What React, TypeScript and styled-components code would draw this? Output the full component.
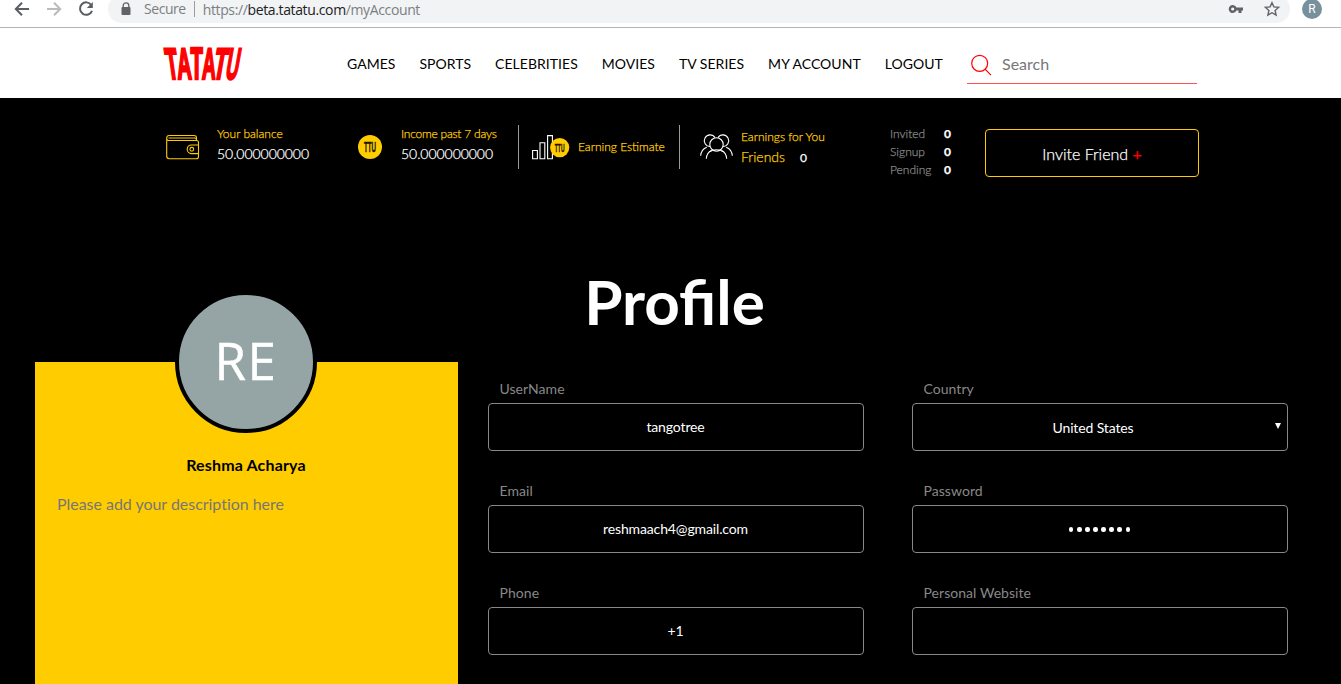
import React from 'react'
import styled, { createGlobalStyle } from 'styled-components'

const GlobalStyle = createGlobalStyle`
  * {
    box-sizing: border-box;
  }
  body {
    margin: 0;
    background-color: #000;
    font-family: Lato, "Liberation Sans", sans-serif;
    overflow: hidden;
  }
  svg {
    display: block;
    flex-shrink: 0;
    overflow: visible;
  }
`

const Page = styled.div`
  height: 684px;
  overflow: hidden;
  background-color: #000;
`

/* browser bar */
const BrowserBar = styled.div`
  display: flex;
  align-items: flex-start;
  height: 28px;
  background-color: #fff;
  border-bottom: 1px solid #b2b4b6;
`
const BrowserButtons = styled.div`
  display: flex;
  width: 108px;
  padding-left: 13px;
  gap: 14px;
`
const AddressBar = styled.div`
  display: flex;
  align-items: center;
  width: 1182px;
  height: 28px;
  margin-top: -5px;
  padding: 0 10px 0 12px;
  border-radius: 14px;
  background-color: #f1f3f4;
  font-family: "Open Sans", "Noto Sans", sans-serif;
  font-size: 14px;
  color: #7b7f83;
`
const Secure = styled.span`
  margin-left: 12px;
  padding-right: 8px;
  border-right: 1px solid #9a9da1;
  line-height: 16px;
  letter-spacing: -0.45px;
`
const Url = styled.span`
  flex: 1;
  margin-left: 8px;
  letter-spacing: -0.37px;
  b {
    font-weight: 400;
    color: #202124;
  }
`
const BarIcons = styled.div`
  display: flex;
  align-items: center;
  gap: 20px;
`
const UserBadge = styled.div`
  width: 20px;
  height: 20px;
  margin: -1px 0 0 12px;
  border-radius: 50%;
  background-color: #78909c;
  color: #fff;
  font-family: Roboto, sans-serif;
  font-size: 12px;
  line-height: 20px;
  text-align: center;
`

/* site header */
const Header = styled.header`
  display: flex;
  height: 70px;
  padding-left: 163px;
  background-color: #fff;
`
const LogoBox = styled.div`
  width: 184px;
  padding-top: 20px;
`
const Nav = styled.nav`
  display: flex;
  gap: 24px;
  width: 620px;
  line-height: 72px;
  font-size: 14px;
  letter-spacing: 0.03px;
  white-space: nowrap;
  color: #000;
`
const SearchBox = styled.div`
  display: flex;
  align-items: center;
  width: 230px;
  height: 38px;
  margin-top: 18px;
  padding: 0 0 2px 4px;
  gap: 10px;
  border-bottom: 1px solid #ff5050;
  font-size: 16px;
  color: #777;
`

/* balance row */
const Stats = styled.section`
  display: flex;
  height: 79px;
  padding: 27px 0 0 166px;
  color: #fff;
  font-weight: 300;
  -webkit-text-stroke: 0.25px;
`
const Stat = styled.div<{ $width: number; $gap: number; $line?: boolean; $left?: number }>`
  display: flex;
  align-items: center;
  width: ${(p) => p.$width}px;
  height: 44px;
  padding-left: ${(p) => p.$left || 0}px;
  gap: ${(p) => p.$gap}px;
  border-left: ${(p) => (p.$line ? '1px solid #999' : 'none')};
  white-space: nowrap;
`
const StatLabel = styled.div<{ $spacing?: number }>`
  font-size: 12px;
  line-height: 20px;
  letter-spacing: ${(p) => p.$spacing || 0}px;
  color: #fc0;
`
const StatValue = styled.div`
  font-size: 14px;
  line-height: 20px;
  letter-spacing: -0.05px;
`
const StatText = styled.div<{ $up?: number }>`
  margin-top: ${(p) => -(p.$up || 0)}px;
`
const Friends = styled.div`
  display: flex;
  gap: 15px;
  font-size: 14px;
  line-height: 20px;
  color: #fc0;
  span {
    padding-top: 1px;
    font-size: 12px;
    color: #fff;
    font-weight: 400;
  }
`
const Invites = styled.dl`
  display: grid;
  grid-template-columns: 54px 41px;
  grid-auto-rows: 18px;
  margin: 0;
  font-size: 12px;
  line-height: 18px;
  color: #888;
  dd {
    margin: 0;
    color: #fff;
    font-weight: 700;
  }
`
const InviteButton = styled.button`
  width: 214px;
  height: 48px;
  margin-top: 4px;
  padding: 0;
  border: 1px solid #fc0;
  border-radius: 4px;
  background: none;
  color: #fff;
  font: 300 16px Lato, sans-serif;
  span {
    color: #f00;
    font-weight: 400;
  }
`

/* profile */
const Title = styled.h1`
  height: 88px;
  margin: 86px 0 0 8px;
  font-size: 62px;
  line-height: 76px;
  text-align: center;
  color: #fff;
`
const Profile = styled.main`
  display: flex;
  align-items: flex-start;
  margin-top: 11px;
  padding-left: 35px;
`
const Card = styled.aside`
  display: flex;
  flex-direction: column;
  align-items: center;
  width: 423px;
  height: 330px;
  padding-right: 1px;
  background-color: #fc0;
`
const Avatar = styled.div`
  width: 142px;
  height: 142px;
  margin-top: -71px;
  border: 4px solid #000;
  border-radius: 50%;
  background-color: #95a5a6;
  color: #fff;
  font-family: "Open Sans", sans-serif;
  font-size: 51px;
  line-height: 130px;
  letter-spacing: 1.5px;
  text-align: center;
  -webkit-text-stroke: 0.5px;
`
const Name = styled.div`
  margin-top: 20px;
  font-size: 16px;
  line-height: 24px;
  letter-spacing: 0.17px;
  font-weight: 700;
  color: #000;
`
const Description = styled.div`
  align-self: stretch;
  margin-top: 15px;
  padding-left: 22px;
  font-size: 16px;
  line-height: 24px;
  letter-spacing: -0.03px;
  font-variant-ligatures: none;
  color: #777;
`
const Form = styled.form`
  display: grid;
  grid-template-columns: 376px 376px;
  grid-auto-rows: 102px;
  column-gap: 48px;
  margin: 16px 0 0 30px;
`
const Label = styled.label`
  display: block;
  padding-left: 11.5px;
  font-size: 14px;
  line-height: 22px;
  letter-spacing: 0.05px;
  color: #888;
`
const Field = styled.div`
  display: flex;
  align-items: center;
  justify-content: center;
  height: 48px;
  margin-top: 3px;
  padding: 0 1px 2px 0;
  border: 1px solid #888;
  border-radius: 4px;
  font-size: 14px;
  letter-spacing: -0.13px;
  color: #fff;
`
const SelectField = styled(Field)`
  padding: 0 5px 0 0;
  span {
    flex: 1;
    margin-left: -1px;
    text-align: center;
  }
`
const Dots = styled.span`
  display: flex;
  gap: 3.6px;
  margin-top: 3px;
  i {
    width: 4.5px;
    height: 4.5px;
    border-radius: 50%;
    background-color: #fff;
  }
`

// each letter is condensed and leans outwards from the middle
const logoLetters = [
  { char: 'T', x: 0.6, skew: 8, sx: 0.98 },
  { char: 'A', x: 13.2, skew: 3, sx: 1 },
  { char: 'T', x: 27.6, skew: 0, sx: 1.01 },
  { char: 'A', x: 39.8, skew: -2, sx: 0.95 },
  { char: 'T', x: 54.3, skew: -10, sx: 1.08 },
  { char: 'U', x: 67, skew: -10, sx: 0.88 },
]

function Logo() {
  return (
    <svg width="82" height="33" viewBox="0 0 82 33">
      {logoLetters.map((l, i) => (
        <text
          key={i}
          transform={`translate(${l.x} 0) skewX(${l.skew}) translate(0 31.2) scale(${l.sx} 2.2)`}
          fontFamily="Liberation Sans, sans-serif"
          fontWeight="700"
          fontSize="20"
          fill="#f00"
          stroke="#f00"
          strokeWidth="2"
          vectorEffect="non-scaling-stroke"
        >
          {l.char}
        </text>
      ))}
    </svg>
  )
}

function Arrow({ color, flip }: { color: string; flip?: boolean }) {
  return (
    <svg width="18" height="18" viewBox="0 0 18 18" fill="none" stroke={color} strokeWidth="2">
      <path d={flip ? 'M2 9h13M9 2.7l6.2 6.3L9 15.3' : 'M16 9H3M9 2.7L2.8 9 9 15.3'} />
    </svg>
  )
}

const CoinText = styled.text`
  font-family: "Liberation Sans", sans-serif;
  font-weight: 700;
  font-size: 10px;
  fill: #1a1400;
  stroke: #1a1400;
  stroke-width: 0.3px;
`

function Coin({ size }: { size: number }) {
  return (
    <svg width={size} height={size} viewBox="0 0 24 24">
      <circle cx="12" cy="12" r="12" fill="#fc0" />
      <CoinText transform="translate(6 17) scale(.62 1.45)">TTU</CoinText>
    </svg>
  )
}

function Wallet() {
  return (
    <svg width="34" height="26" viewBox="0 0 34 26" fill="none" stroke="#fc0" strokeWidth="1.1">
      <path d="M30.5 6.5V4a2.5 2.5 0 0 0-2.5-2.5H3a2.3 2.3 0 0 0-2.3 2.3V22a2.7 2.7 0 0 0 2.7 2.7h26.8a2.3 2.3 0 0 0 2.3-2.3V8.5a2 2 0 0 0-2-2H3A2.3 2.3 0 0 1 .7 4" />
      <path d="M2.5 4h26a2 2 0 0 1 2 2" />
      <path d="M32.5 11h-7a4.3 4.3 0 0 0 0 8.6h7" />
      <circle cx="25.8" cy="15.3" r="1.9" />
    </svg>
  )
}

function EarningIcon() {
  return (
    <svg width="38" height="26" viewBox="0 0 38 26">
      <g fill="none" stroke="#fff" strokeWidth="1.1">
        <path d="M.6 16.5h4.8v8.3H.6zM8 8.8h4.8v16H8zM15.6 1.6h4.8v23.200h-4.800z" />
      </g>
      <circle cx="27.7" cy="13.6" r="9.6" fill="#fc0" />
      <CoinText transform="translate(22.800 17.600) scale(.5 1.15)">TTU</CoinText>
    </svg>
  )
}

function PeopleIcon() {
  return (
    <svg width="34" height="26" viewBox="0 0 34 26" fill="none" stroke="#fff" strokeWidth="1.1">
      <circle cx="16.5" cy="10.5" r="6.7" />
      <path d="M10.2 12.5A5.8 5.8 0 1 1 15 3.6M18 3.6a5.8 5.8 0 1 1 4.8 8.9" />
      <path d="M9.5 17.7c2-1.4 4.2-2 7-2s5 .6 7 2" />
      <path d="M6.3 24.8c.3-4.2 2-6.8 5.2-8.2M26.7 24.8c-.3-4.2-2-6.8-5.2-8.2" />
      <path d="M.6 21.7c.5-4.2 2.7-7.2 6.2-8.5M32.4 21.7c-.5-4.2-2.7-7.2-6.2-8.5" />
    </svg>
  )
}

const navItems = ['GAMES', 'SPORTS', 'CELEBRITIES', 'MOVIES', 'TV SERIES', 'MY ACCOUNT', 'LOGOUT']

export default function App() {
  return (
    <>
      <GlobalStyle />
      <Page>
        <BrowserBar>
          <BrowserButtons>
            <Arrow color="#5a5d61" />
            <Arrow color="#bbb" flip />
            <svg width="18" height="18" viewBox="0 0 18 18">
              <path d="M14.3 5A6.2 6.2 0 1 0 15 10.8" fill="none" stroke="#5a5d61" strokeWidth="2" />
              <path d="M15.8 2v6h-6z" fill="#5a5d61" />
            </svg>
          </BrowserButtons>
          <AddressBar>
            <svg width="12" height="14" viewBox="0 0 12 14">
              <path d="M3.2 6V3.7a2.8 2.8 0 0 1 5.6 0V6" fill="none" stroke="#5f6368" strokeWidth="1.3" />
              <rect x="1.5" y="5" width="9" height="8" rx="1" fill="#5f6368" />
            </svg>
            <Secure>Secure</Secure>
            <Url>
              https://<b>beta.tatatu.com</b>/myAccount
            </Url>
            <BarIcons>
              <svg width="16" height="10" viewBox="0 0 16 10">
                <path fillRule="evenodd" fill="#5f6368" d="M8.4 3.5A4 4 0 1 0 8.4 6.5H10.5V9H13.5V6.5H15V3.5zM4.7 3.4a1.6 1.6 0 1 1 0 3.2 1.6 1.6 0 0 1 0-3.2z" />
              </svg>
              <svg width="16" height="16" viewBox="0 0 16 16" fill="none" stroke="#5f6368" strokeWidth="1.4">
                <path d="M8 1.7l1.9 4.2 4.7.5-3.5 3.1 1 4.6L8 11.7l-4.1 2.4 1-4.600L1.400 6.400l4.700-.5z" />
              </svg>
            </BarIcons>
          </AddressBar>
          <UserBadge>R</UserBadge>
        </BrowserBar>

        <Header>
          <LogoBox>
            <Logo />
          </LogoBox>
          <Nav>
            {navItems.map((item) => (
              <a key={item}>{item}</a>
            ))}
          </Nav>
          <SearchBox>
            <svg width="21" height="22" viewBox="0 0 21 22" fill="none" stroke="#f00" strokeWidth="1.2">
              <circle cx="8.7" cy="10.3" r="8" />
              <path d="M14 16.2l6 6" />
            </svg>
            Search
          </SearchBox>
        </Header>

        <Stats>
          <Stat $width={192} $gap={17}>
            <Wallet />
            <StatText $up={7}>
              <StatLabel>Your balance</StatLabel>
              <StatValue>50.000000000</StatValue>
            </StatText>
          </Stat>
          <Stat $width={160} $gap={19}>
            <Coin size={24} />
            <StatText $up={7}>
              <StatLabel $spacing={-0.22}>Income past 7 days</StatLabel>
              <StatValue>50.000000000</StatValue>
            </StatText>
          </Stat>
          <Stat $width={161} $gap={8} $left={13} $line>
            <EarningIcon />
            <StatLabel>Earning Estimate</StatLabel>
          </Stat>
          <Stat $width={211} $gap={7} $left={20} $line>
            <PeopleIcon />
            <StatText>
              <StatLabel>Earnings for You</StatLabel>
              <Friends>
                Friends <span>0</span>
              </Friends>
            </StatText>
          </Stat>
          <Invites>
            <dt>Invited</dt>
            <dd>0</dd>
            <dt>Signup</dt>
            <dd>0</dd>
            <dt>Pending</dt>
            <dd>0</dd>
          </Invites>
          <InviteButton>
            Invite Friend <span>+</span>
          </InviteButton>
        </Stats>

        <Title>Profile</Title>
        <Profile>
          <Card>
            <Avatar>RE</Avatar>
            <Name>Reshma Acharya</Name>
            <Description>Please add your description here</Description>
          </Card>
          <Form>
            <div>
              <Label>UserName</Label>
              <Field>tangotree</Field>
            </div>
            <div>
              <Label>Country</Label>
              <SelectField>
                <span>United States</span>
                <svg width="8" height="8" viewBox="0 0 8 8">
                  <path d="M1 0h6L4 6z" fill="#fff" />
                </svg>
              </SelectField>
            </div>
            <div>
              <Label>Email</Label>
              <Field>reshmaach4@gmail.com</Field>
            </div>
            <div>
              <Label>Password</Label>
              <Field>
                <Dots>
                  {Array.from({ length: 8 }, (_, i) => (
                    <i key={i} />
                  ))}
                </Dots>
              </Field>
            </div>
            <div>
              <Label>Phone</Label>
              <Field>+1</Field>
            </div>
            <div>
              <Label>Personal Website</Label>
              <Field />
            </div>
          </Form>
        </Profile>
      </Page>
    </>
  )
}
